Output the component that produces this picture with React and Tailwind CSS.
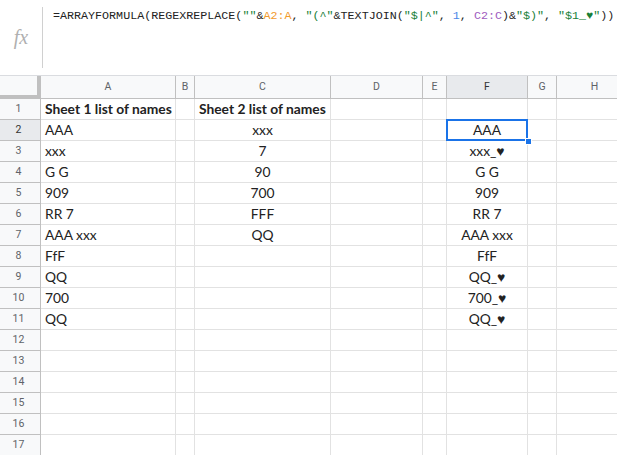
import React from 'react';

const cols = [
  { key: 'A', w: 'w-[135px]' },
  { key: 'B', w: 'w-[19px]' },
  { key: 'C', w: 'w-[136px]' },
  { key: 'D', w: 'w-[92px]' },
  { key: 'E', w: 'w-[24px]' },
  { key: 'F', w: 'w-[81px]' },
  { key: 'G', w: 'w-[29px]' },
  { key: 'H', w: 'w-[76px]' },
];

const colA = ['Sheet 1 list of names', 'AAA', 'xxx', 'G G', '909', 'RR 7', 'AAA xxx', 'FfF', 'QQ', '700', 'QQ'];
const colC = ['Sheet 2 list of names', 'xxx', '7', '90', '700', 'FFF', 'QQ'];
const colF = ['', 'AAA', 'xxx_♥', 'G G', '909', 'RR 7', 'AAA xxx', 'FfF', 'QQ_♥', '700_♥', 'QQ_♥'];

function Formula() {
  const g = 'text-[#188038]';
  return (
    <div className="font-['Liberation_Mono',monospace] text-[11.7px] leading-4 text-[#222] whitespace-nowrap">
      =ARRAYFORMULA(REGEXREPLACE(<span className={g}>""</span>&amp;
      <span className="text-[#f29b2c]">A2:A</span>, <span className={g}>"(^"</span>&amp;TEXTJOIN(
      <span className={g}>"$|^"</span>, <span className="text-[#4a86e8]">1</span>,{' '}
      <span className="text-[#a05cbf]">C2:C</span>)&amp;<span className={g}>"$)"</span>,{' '}
      <span className={g}>"$1_♥"</span>))
    </div>
  );
}

function Cell({ w, align = 'left', bold, children, selected }) {
  return (
    <div
      className={`${w} shrink-0 h-full border-r border-b border-[#e2e2e2] relative flex items-center px-1 pt-px whitespace-nowrap ${
        align === 'center' ? 'justify-center' : 'justify-start'
      } ${bold ? 'font-bold' : ''} ${selected ? 'z-10' : ''}`}
    >
      {children}
      {selected && (
        <>
          <div className="absolute -left-px -top-px right-[-1px] bottom-[-1px] border-2 border-[#1a73e8] pointer-events-none" />
          <div className="absolute right-[-5px] bottom-[-5px] w-[7px] h-[7px] bg-[#1a73e8] border border-white" />
        </>
      )}
    </div>
  );
}

export default function App() {
  const rows = Array.from({ length: 17 }, (_, i) => i);
  return (
    <div className="w-[617px] h-[455px] overflow-hidden bg-white font-['Lato',sans-serif] text-[13.8px] text-[#222]">
      {/* formula bar */}
      <div className="h-[76px] flex border-b border-[#dadce0]">
        <div className="w-[42px] shrink-0 flex items-center justify-center">
          <span className="font-['Liberation_Serif',serif] italic text-[20px] text-[#b0b0b0] pb-[2px]">fx</span>
        </div>
        <div className="my-[7px] w-px bg-[#d0d0d0]" />
        <div className="pl-[10px] pt-[8px] overflow-hidden">
          <Formula />
        </div>
      </div>

      {/* column headers */}
      <div className="h-[23px] flex font-['Roboto',sans-serif] text-[10.5px] text-[#5f6368]">
        <div className="w-[41px] shrink-0 bg-[#f8f9fa] border-r-4 border-b-4 border-[#c0c0c0]" />
        {cols.map((c) => (
          <div
            key={c.key}
            className={`${c.w} shrink-0 flex items-center justify-center border-r border-b border-[#c0c0c0] ${
              c.key === 'F' ? 'bg-[#e8eaed] text-[#333]' : 'bg-[#f8f9fa]'
            }`}
          >
            {c.key}
          </div>
        ))}
      </div>

      {/* rows */}
      {rows.map((i) => (
        <div key={i} className={`h-[21px] flex relative ${i === 1 ? 'z-10' : ''}`}>
          <div
            className={`w-[41px] shrink-0 flex items-center justify-center pr-[3px] border-r border-b border-[#c0c0c0] font-['Roboto',sans-serif] text-[10.5px] text-[#5f6368] ${
              i === 1 ? 'bg-[#e8eaed] text-[#333]' : 'bg-[#f8f9fa]'
            }`}
          >
            {i + 1}
          </div>
          <Cell w="w-[135px]" bold={i === 0}>{colA[i] || ''}</Cell>
          <Cell w="w-[19px]" />
          <Cell w="w-[136px]" align={i === 0 ? 'left' : 'center'} bold={i === 0}>{colC[i] || ''}</Cell>
          <Cell w="w-[92px]" />
          <Cell w="w-[24px]" />
          <Cell w="w-[81px]" align="center" selected={i === 1}>{colF[i] || ''}</Cell>
          <Cell w="w-[29px]" />
          <Cell w="w-[76px]" />
        </div>
      ))}
    </div>
  );
}
